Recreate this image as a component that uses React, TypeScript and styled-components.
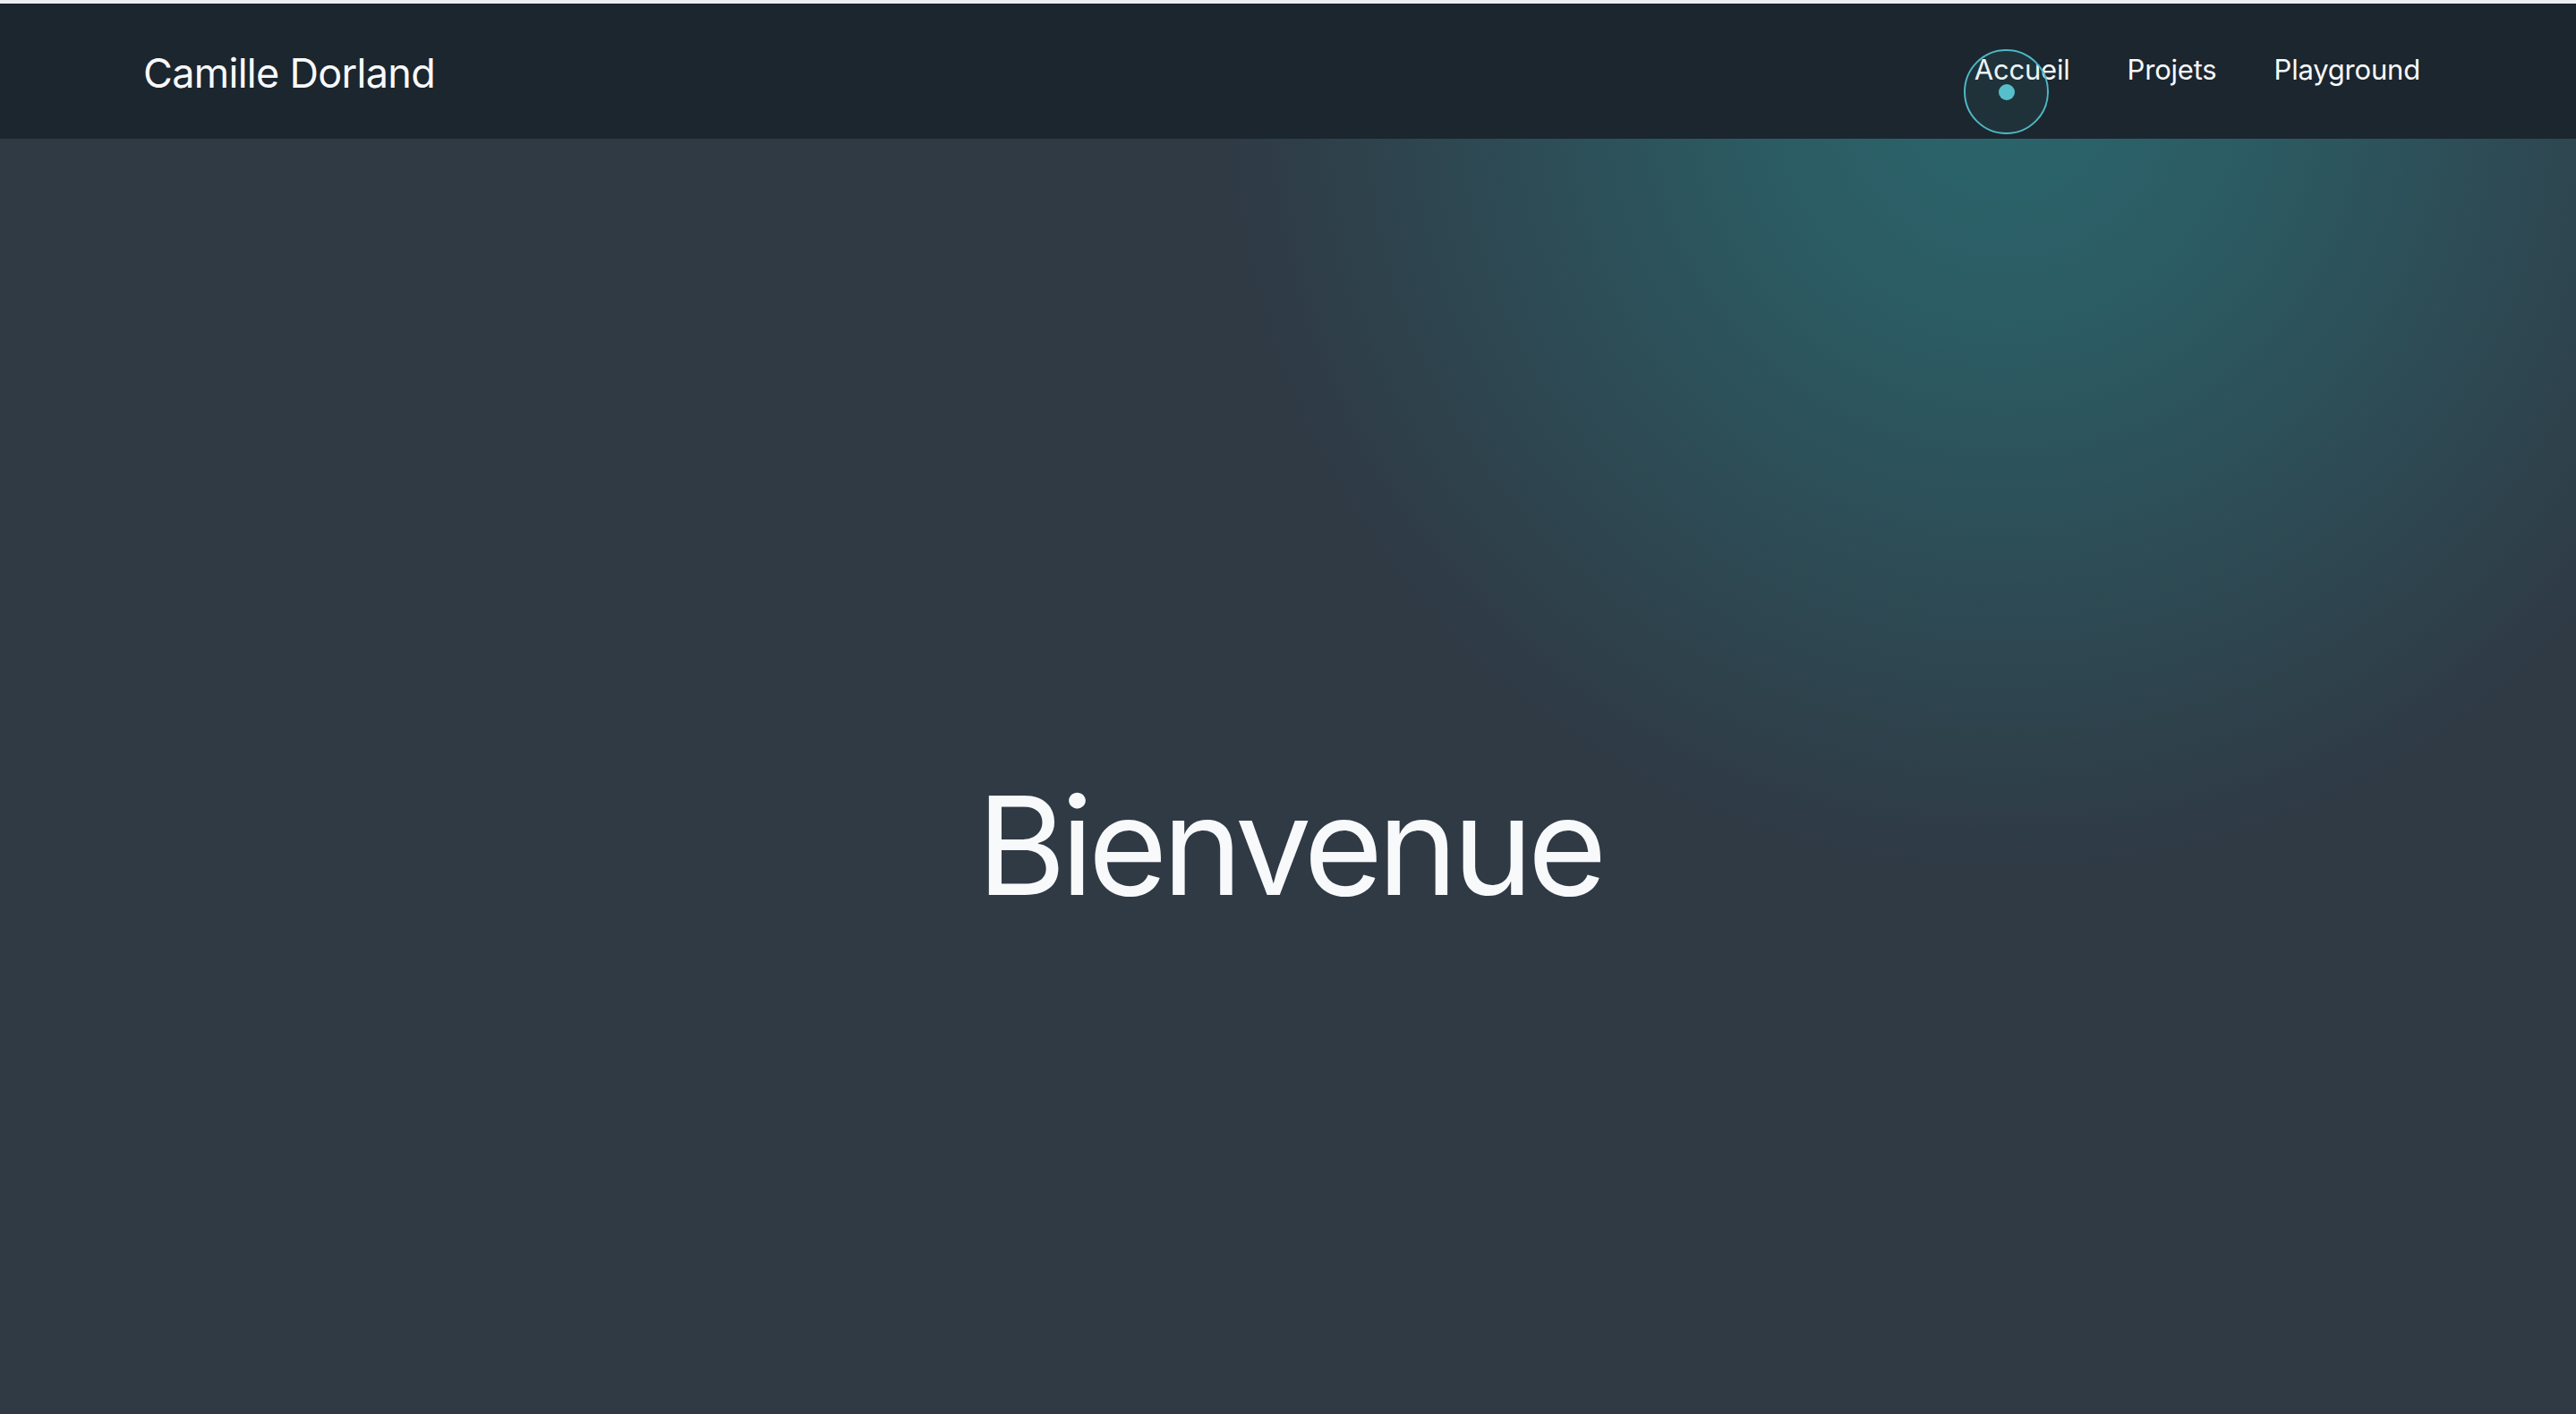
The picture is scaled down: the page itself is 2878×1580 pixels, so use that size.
import React from 'react';
import styled, { createGlobalStyle } from 'styled-components';

const GlobalStyle = createGlobalStyle`
    html, body {
        margin: 0;
        padding: 0;
        background: #2f3a45;
        overflow: hidden;
    }
    body {
        font-family: Inter, "Noto Sans", "Liberation Sans", sans-serif;
        color: #f8f9fb;
    }
    * {
        box-sizing: border-box;
    }
`;

const Page = styled.div`
    position: relative;
    min-height: 100vh;
    display: flex;
    flex-direction: column;
`;

const TopStrip = styled.div`
    height: 4px;
    background: #eceef1;
`;

const Header = styled.header`
    height: 151px;
    padding: 0 158px 0 160px;
    display: flex;
    align-items: center;
    justify-content: space-between;
    background-color: #1b262e;
`;

const Logo = styled.a`
    font-size: 45px;
    font-weight: 400;
    letter-spacing: -0.7px;
    color: #f8f9fb;
    text-decoration: none;
    margin-top: 3px;
`;

const Nav = styled.nav`
    display: flex;
    gap: 32px;
    margin-top: -5px;
`;

const NavLink = styled.a`
    padding: 0 16px;
    font-size: 31px;
    letter-spacing: -0.2px;
    color: #f8f9fb;
    text-decoration: none;
`;

const Hero = styled.main`
    height: 100vh;
    display: flex;
    align-items: center;
    justify-content: center;
    background:
        radial-gradient(circle 870px at 2241px -52px,
            rgba(40, 132, 136, 0.58) 0%,
            rgba(40, 132, 136, 0.44) 33%,
            rgba(40, 132, 136, 0.22) 66%,
            rgba(40, 132, 136, 0) 100%),
        #2f3a45;
`;

const Title = styled.h1`
    margin: 0 0 0 3px;
    font-size: 152px;
    font-weight: 400;
    letter-spacing: -6px;
    color: #f8f9fb;
`;

const CursorRing = styled.div`
    position: absolute;
    left: 2194px;
    top: 55px;
    width: 95px;
    height: 95px;
    border-radius: 50%;
    border: 2px solid #4fb7c3;
    background: rgba(90, 190, 200, 0.08);
    pointer-events: none;
`;

const CursorDot = styled.div`
    position: absolute;
    left: 2233px;
    top: 94px;
    width: 18px;
    height: 18px;
    border-radius: 50%;
    background: #57bfcb;
    pointer-events: none;
`;

export default function App() {
    return (
        <>
            <GlobalStyle />
            <Page>
                <TopStrip />
                <Header>
                    <Logo href="#">Camille Dorland</Logo>
                    <Nav>
                        <NavLink href="#">Accueil</NavLink>
                        <NavLink href="#">Projets</NavLink>
                        <NavLink href="#">Playground</NavLink>
                    </Nav>
                </Header>
                <Hero>
                    <Title>Bienvenue</Title>
                </Hero>
                <CursorRing />
                <CursorDot />
            </Page>
        </>
    );
}
